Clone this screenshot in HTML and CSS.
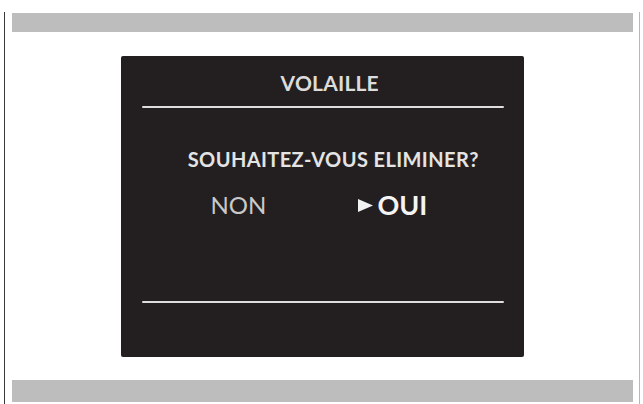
FILE: index.html
```html
<!DOCTYPE html>
<html lang="fr">
<head>
<meta charset="utf-8">
<title>Volaille</title>
<link rel="stylesheet" href="styles.css">
</head>
<body>
<div class="frame">
  <div class="bar bar-top"></div>
  <div class="screen">
    <div class="title">VOLAILLE</div>
    <div class="rule"></div>
    <div class="question">SOUHAITEZ-VOUS ELIMINER?</div>
    <div class="options">
      <span class="opt opt-non">NON</span>
      <span class="opt opt-oui"><svg class="arrow" viewBox="0 0 15 13" width="15" height="13"><polygon points="0,0 15,6.5 0,13" fill="#f2f2f2"/></svg>OUI</span>
    </div>
    <div class="rule rule-bottom"></div>
  </div>
  <div class="bar bar-bottom"></div>
</div>
</body>
</html>
```

FILE: styles.css
```css
html, body {
  margin: 0;
  padding: 0;
  background: #ffffff;
}
body {
  font-family: "Lato", "Open Sans", "Liberation Sans", sans-serif;
  width: 643px;
  height: 404px;
  overflow: hidden;
}
.frame {
  margin: 12px 0 0 4px;
  width: 636px;
  height: 400px;
  border-left: 1.5px solid #3a3a3a;
  border-right: 1px solid #b8b8b8;
  padding-top: 1px;
  box-sizing: border-box;
}
.bar {
  background: #bdbdbd;
  margin: 0 6px 0 6.5px;
}
.bar-top {
  height: 19px;
}
.bar-bottom {
  height: 22px;
  margin-top: 23px;
}
.screen {
  margin: 24px 0 0 116px;
  width: 403px;
  height: 301px;
  background: #231f20;
  border-radius: 2px;
  box-sizing: border-box;
  padding: 0 20px 0 20.5px;
  display: flex;
  flex-direction: column;
  color: #e8e8e8;
}
.title {
  height: 50px;
  line-height: 54px;
  text-align: center;
  font-weight: 700;
  font-size: 21px;
  color: #dcdcdc;
  letter-spacing: 0.2px;
  padding-left: 14px;
}
.rule {
  height: 2px;
  background: #dedede;
  border-radius: 1px;
}
.question {
  margin-top: 36px;
  line-height: 30px;
  text-align: center;
  font-weight: 700;
  font-size: 20px;
  color: #e4e4e4;
  letter-spacing: 0.4px;
  padding-left: 21px;
}
.options {
  margin-top: 14px;
  height: 34px;
  display: flex;
  align-items: center;
  padding-left: 69px;
}
.opt {
  line-height: 34px;
}
.opt-non {
  color: #c9c9c9;
  font-weight: 400;
  font-size: 24px;
  width: 147px;
}
.opt-oui {
  color: #f4f4f4;
  font-weight: 700;
  font-size: 27px;
  display: flex;
  align-items: center;
}
.arrow {
  margin-right: 5px;
  margin-top: 1px;
}
.rule-bottom {
  margin-top: 79px;
}
```
